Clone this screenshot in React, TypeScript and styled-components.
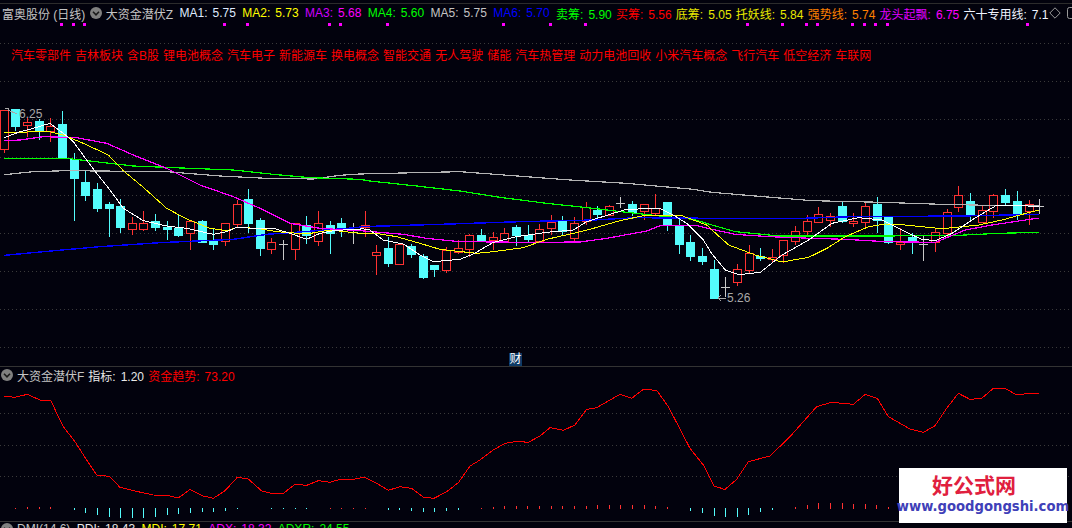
import React from 'react';
import styled, { createGlobalStyle } from 'styled-components';

const GlobalStyle = createGlobalStyle`
  html, body {
    margin: 0;
    background: #02020d;
  }
`;

const Screen = styled.div`
  position: relative;
  display: flex;
  flex-direction: column;
  width: 1072px;
  height: 528px;
  overflow: hidden;
  background: #02020d;
  font-family: "Liberation Sans", "Noto Sans CJK SC", sans-serif;
  font-size: 12px;
`;

const MainPanel = styled.section`
  position: relative;
  flex: none;
  height: 366px;
  border-bottom: 1px solid #333;
`;

const SubPanel = styled.section`
  position: relative;
  flex: none;
  height: 154px;
  border-bottom: 1px solid #333;
`;

const Canvas = styled.svg`
  position: absolute;
  top: 0;
  left: 0;
  display: block;
`;

const TopRule = styled.div`
  position: relative;
  height: 3px;
  border-bottom: 1px solid #2c2c2c;
`;

const Legend = styled.div<{ $height?: number; $left?: number }>`
  position: relative;
  flex: none;
  display: flex;
  align-items: center;
  gap: 6.4px;
  height: ${(p) => p.$height ?? 18}px;
  padding-left: ${(p) => p.$left ?? 2}px;
  white-space: nowrap;
  overflow: hidden;
`;

const Title = styled.span<{ $pull?: number }>`
  margin-left: ${(p) => -(p.$pull ?? 0)}px;
  color: #c4c4c4;
`;

const Item = styled.span<{ $label: string; $value?: string; $tight?: boolean; $pull?: number }>`
  display: inline-flex;
  align-items: baseline;
  gap: 5px;
  margin-left: ${(p) => -(p.$pull ?? 0)}px;
  margin-right: ${(p) => (p.$tight ? -2.2 : 0)}px;
  color: ${(p) => p.$label};

  b {
    font-weight: 400;
    color: ${(p) => p.$value ?? p.$label};
  }
`;

const RoundToggle = styled.svg<{ $pull?: number }>`
  flex: none;
  margin-left: ${(p) => -(p.$pull ?? 0)}px;
`;

const ToolIcon = styled.svg<{ $pull?: number }>`
  flex: none;
  margin-left: ${(p) => -(p.$pull ?? 0)}px;
`;

const ConceptRow = styled.div`
  position: relative;
  display: flex;
  gap: 4px;
  margin-top: 26px;
  padding-left: 11px;
  line-height: 16px;
  color: #ff0000;
  white-space: nowrap;
`;

const EventBadge = styled.div`
  position: absolute;
  left: 509px;
  bottom: 0;
  width: 13px;
  height: 13px;
  line-height: 13px;
  text-align: center;
  background: #0d3a66;
  color: #fff;
`;

const Watermark = styled.div`
  position: absolute;
  left: 899px;
  top: 468px;
  display: flex;
  flex-direction: column;
  align-items: center;
  width: 168px;
  height: 55px;
  background: #fff;
`;

const WatermarkName = styled.div`
  margin-top: 5px;
  padding-right: 18px;
  font-size: 21px;
  line-height: 26px;
  font-weight: 700;
  color: #e0203e;
`;

const WatermarkUrl = styled.div`
  font-family: "DejaVu Sans", sans-serif;
  font-size: 13.2px;
  line-height: 16px;
  font-weight: 700;
  color: #4040b8;
`;

const PriceMark = styled.text`
  font-size: 12px;
  font-family: "Liberation Sans", sans-serif;
  fill: #a8a8a8;
`;

type Candle = [number, number, number, number, number, 'r' | 'c' | 'g'];

// x, wick top, wick bottom, body top, body bottom, kind
const candles: Candle[] = [
  [4, 110, 153, 110, 149, 'r'], [15, 109, 131, 109, 126, 'c'], [27, 118, 137, 122, 125, 'r'],
  [39, 119, 140, 121, 130, 'c'], [50, 118, 142, 126, 131, 'r'], [62, 111, 158, 124, 157, 'c'],
  [74, 153, 221, 159, 178, 'c'], [85, 170, 201, 182, 195, 'c'], [97, 183, 212, 189, 208, 'c'],
  [109, 202, 237, 204, 208, 'c'], [120, 199, 233, 206, 227, 'c'], [132, 217, 235, 223, 229, 'r'],
  [143, 211, 231, 223, 229, 'r'], [155, 214, 231, 221, 227, 'c'], [167, 221, 240, 227, 229, 'c'],
  [178, 214, 237, 228, 235, 'c'], [190, 220, 250, 221, 233, 'r'], [202, 220, 243, 221, 242, 'c'],
  [213, 228, 250, 240, 244, 'c'], [225, 223, 246, 223, 241, 'r'], [237, 200, 227, 204, 224, 'r'],
  [248, 189, 233, 199, 223, 'c'], [260, 218, 256, 220, 248, 'c'], [271, 238, 254, 242, 249, 'r'],
  [283, 240, 260, 244, 244, 'g'], [295, 223, 260, 223, 249, 'r'], [306, 216, 244, 225, 235, 'c'],
  [318, 211, 246, 223, 241, 'r'], [330, 221, 254, 225, 233, 'c'], [341, 218, 237, 223, 227, 'c'],
  [353, 223, 244, 232, 232, 'g'], [365, 211, 237, 225, 227, 'r'], [376, 245, 275, 252, 255, 'r'],
  [388, 237, 267, 248, 263, 'c'], [399, 244, 264, 244, 264, 'r'], [411, 244, 258, 246, 254, 'c'],
  [423, 254, 279, 256, 277, 'c'], [434, 265, 277, 265, 269, 'c'], [446, 247, 273, 250, 270, 'r'],
  [458, 240, 254, 248, 252, 'r'], [469, 234, 257, 235, 249, 'r'], [481, 229, 242, 235, 240, 'c'],
  [493, 232, 250, 237, 240, 'r'], [504, 228, 242, 233, 242, 'r'], [516, 225, 246, 227, 235, 'c'],
  [528, 225, 242, 235, 239, 'c'], [539, 224, 242, 229, 241, 'r'], [551, 215, 235, 222, 228, 'r'],
  [562, 216, 235, 221, 231, 'c'], [574, 217, 242, 223, 238, 'r'], [586, 202, 225, 207, 221, 'r'],
  [597, 206, 218, 210, 214, 'c'], [609, 205, 215, 206, 215, 'r'], [620, 197, 208, 203, 203, 'g'],
  [632, 201, 216, 204, 212, 'c'], [644, 204, 220, 204, 211, 'r'], [655, 194, 215, 208, 213, 'r'],
  [667, 202, 231, 202, 225, 'c'], [679, 218, 254, 226, 244, 'c'], [690, 235, 261, 242, 256, 'c'],
  [702, 248, 265, 256, 261, 'c'], [714, 260, 298, 269, 298, 'c'], [725, 277, 297, 287, 287, 'g'],
  [737, 264, 286, 269, 282, 'r'], [749, 245, 273, 253, 270, 'r'], [760, 248, 261, 256, 258, 'c'],
  [772, 249, 263, 257, 259, 'r'], [783, 240, 263, 240, 255, 'r'], [795, 226, 245, 231, 241, 'r'],
  [807, 215, 235, 221, 231, 'r'], [818, 207, 222, 214, 222, 'r'], [830, 213, 227, 216, 220, 'r'],
  [842, 202, 223, 206, 221, 'c'], [853, 213, 227, 221, 223, 'r'], [865, 202, 227, 206, 222, 'r'],
  [877, 197, 233, 204, 220, 'c'], [888, 217, 244, 217, 242, 'c'], [900, 228, 250, 242, 244, 'r'],
  [912, 233, 254, 237, 242, 'c'], [923, 235, 261, 244, 244, 'g'], [935, 229, 252, 232, 242, 'r'],
  [947, 209, 237, 212, 233, 'r'], [958, 186, 212, 195, 207, 'r'], [970, 193, 220, 201, 215, 'c'],
  [982, 205, 223, 210, 222, 'r'], [993, 194, 218, 195, 211, 'r'], [1005, 189, 205, 195, 202, 'c'],
  [1017, 191, 220, 201, 214, 'c'], [1029, 200, 225, 204, 211, 'r'], [1039, 199, 214, 206, 206, 'g'],
];

const candleColor = { r: '#ff3232', c: '#54fcfc', g: '#c8c8c8' };

// lines were traced off a 3x crop: each run is origin x, origin y and then x,y pairs at 3x
const traced = (runs: [number, number, number[]][]) =>
  runs
    .flatMap(([ox, oy, raw]) =>
      raw.flatMap((v, i) => (i % 2 === 0 ? [`${ox + v / 3},${oy + raw[i + 1] / 3}`] : [])),
    )
    .join(' ');

const maLines = [
  {
    color: '#b4b4b4',
    width: 1.2,
    points: traced([
      [0, 100, [13, 224, 100, 215, 200, 212, 500, 215, 660, 228, 800, 235, 940, 237, 1020, 226, 1080, 222]],
      [360, 180, [300, -25, 630, 0, 800, 10, 1000, 28]],
      [712, 170, [0, 67, 130, 78, 300, 92, 510, 97, 690, 103, 830, 106, 980, 108]],
    ]),
  },
  {
    color: '#00ff00',
    width: 1.2,
    points: traced([
      [0, 100, [13, 175, 200, 175, 260, 182, 400, 198, 520, 203, 700, 210, 830, 224, 930, 233, 1080, 238]],
      [360, 180, [30, 3, 170, 18, 300, 33, 420, 52, 560, 70, 700, 85, 800, 97, 900, 108, 1000, 118]],
      [712, 170, [0, 165, 70, 185, 200, 198, 480, 198, 720, 197, 860, 190, 980, 187]],
    ]),
  },
  {
    color: '#0000ff',
    width: 1.4,
    points: traced([
      [0, 100, [13, 466, 130, 455, 300, 440, 480, 428, 700, 418, 800, 403, 900, 396, 1080, 382]],
      [360, 180, [0, 140, 240, 133, 480, 125, 700, 120, 830, 113]],
      [712, 170, [0, 145, 270, 145, 420, 140, 750, 138, 980, 133]],
    ]),
  },
  {
    color: '#ff00ff',
    width: 1.2,
    points: traced([
      [0, 100, [13, 122, 60, 120, 130, 110, 230, 113, 320, 130, 400, 165, 500, 205, 600, 255, 700, 290, 780, 325, 870, 370, 960, 385, 1080, 392]],
      [360, 180, [0, 152, 70, 158, 130, 163, 200, 175, 300, 185, 520, 187, 660, 186, 740, 175, 860, 153, 900, 137, 1010, 137]],
      [712, 170, [0, 178, 70, 193, 170, 200, 300, 205, 400, 208, 520, 215, 670, 217, 760, 180, 840, 165, 960, 147, 980, 145]],
    ]),
  },
  {
    color: '#ffff00',
    width: 1,
    points: traced([
      [0, 100, [13, 97, 150, 95, 190, 105, 250, 130, 325, 165, 370, 212, 430, 262, 500, 325, 560, 357, 630, 385, 680, 392, 710, 382, 770, 385, 830, 395, 920, 402, 990, 390, 1080, 400]],
      [360, 180, [0, 160, 60, 162, 110, 170, 180, 190, 240, 208, 350, 220, 400, 215, 490, 203, 560, 178, 640, 160, 700, 145, 780, 122, 860, 105, 960, 105, 1040, 135]],
      [712, 170, [0, 180, 50, 225, 130, 255, 210, 276, 290, 262, 345, 235, 400, 200, 470, 170, 520, 162, 580, 165, 690, 176, 800, 165, 870, 150, 960, 125, 980, 120]],
    ]),
  },
  {
    color: '#ffffff',
    width: 1,
    points: traced([
      [0, 100, [13, 113, 60, 95, 100, 85, 150, 70, 190, 100, 220, 125, 260, 180, 290, 220, 330, 270, 370, 325, 430, 362, 500, 378, 560, 385, 640, 403, 680, 395, 710, 382, 760, 385, 820, 385, 870, 400, 920, 418, 960, 400, 1000, 392, 1060, 388, 1080, 388]],
      [360, 180, [0, 145, 30, 150, 70, 180, 130, 192, 180, 225, 220, 245, 300, 238, 340, 222, 400, 187, 470, 170, 560, 157, 640, 150, 680, 125, 760, 100, 800, 88, 900, 85, 940, 105, 980, 130, 1030, 180]],
      [712, 170, [0, 252, 40, 300, 80, 314, 145, 307, 210, 255, 290, 210, 360, 160, 440, 143, 510, 150, 590, 190, 630, 208, 670, 212, 720, 190, 780, 150, 850, 108, 900, 105, 980, 110]],
    ]),
  },
];

const trendLine = traced([
  [0, 360, [12, 108, 45, 112, 82, 103, 120, 120, 152, 120, 175, 170, 190, 200, 225, 245, 260, 300, 290, 345, 328, 349, 360, 382, 400, 392, 460, 405, 505, 407, 535, 414, 570, 388, 610, 408, 640, 415, 675, 392, 712, 352, 745, 357, 785, 393, 815, 400, 850, 400, 885, 373, 920, 376, 955, 362, 990, 367, 1020, 358, 1060, 358, 1080, 354]],
  [360, 360, [15, 352, 50, 370, 85, 391, 120, 380, 155, 385, 190, 411, 222, 415, 260, 395, 295, 368, 330, 318, 360, 300, 400, 270, 435, 250, 470, 244, 505, 247, 540, 228, 570, 203, 610, 211, 645, 195, 680, 148, 710, 143, 780, 103, 815, 115, 850, 88, 890, 91, 925, 140, 990, 265, 1030, 315, 1063, 380, 1080, 382]],
  [720, 360, [0, 385, 15, 388, 50, 358, 85, 305, 150, 288, 210, 230, 290, 140, 335, 127, 400, 133, 436, 103, 472, 115, 505, 170, 570, 207, 610, 217, 645, 197, 680, 145, 715, 100, 750, 118, 785, 115, 820, 85, 855, 85, 890, 105, 925, 100, 957, 100]],
]);

// x, height: positive is a red stick going up, negative a cyan stick going down
const sticks: [number, number][] = [
  [15, 1], [27, 2], [39, 2], [50, 2], [74, -2], [85, -5], [97, -7], [109, -9], [120, -10], [132, -10],
  [143, -10], [155, -9], [167, -7], [178, -6], [190, -5], [202, -4], [213, -4], [225, -3], [237, -1],
  [271, -1], [283, -1], [295, -1], [306, -1], [330, 1], [341, 1], [353, 1], [365, 1], [388, -2], [399, -2],
  [411, -3], [423, -4], [434, -4], [446, -3], [458, -2], [481, 1], [493, 2], [504, 3], [516, 3], [527, 3],
  [539, 3], [551, 3], [562, 3], [574, 3], [586, 3], [597, 4], [609, 4], [620, 4], [632, 4], [644, 4],
  [655, 3], [667, 2], [690, -3], [702, -5], [714, -8], [725, -9], [737, -9], [748, -7], [760, -4], [772, -2],
  [795, 2], [807, 4], [818, 6], [830, 6], [842, 6], [853, 5], [865, 5], [876, 4], [888, 2],
];

const signalDots = [61, 73, 84, 224, 247, 329, 340, 387, 503, 550, 585, 747, 782, 806, 817, 852, 864, 875, 887, 1027];

const concepts = [
  '汽车零部件', '吉林板块', '含B股', '锂电池概念', '汽车电子', '新能源车', '换电概念', '智能交通', '无人驾驶', '储能',
  '汽车热管理', '动力电池回收', '小米汽车概念', '飞行汽车', '低空经济', '车联网',
];

const averages = [
  { label: 'MA1:', value: '5.75', color: '#dfeaff' },
  { label: 'MA2:', value: '5.73', color: '#ffff00' },
  { label: 'MA3:', value: '5.68', color: '#d000ff', valueColor: '#ff00ff' },
  { label: 'MA4:', value: '5.60', color: '#00ff00' },
  { label: 'MA5:', value: '5.75', color: '#c4c4c4' },
  { label: 'MA6:', value: '5.70', color: '#0000ff' },
  { label: '卖筹:', value: '5.90', color: '#00ff00', tight: true },
  { label: '买筹:', value: '5.56', color: '#ff0000', tight: true },
  { label: '底筹:', value: '5.05', color: '#e8e800', tight: true },
  { label: '托妖线:', value: '5.84', color: '#e8e800', tight: true },
  { label: '强势线:', value: '5.74', color: '#ff8000', tight: true },
  { label: '龙头起飘:', value: '6.75', color: '#e000ff', valueColor: '#ff00ff', tight: true },
  { label: '六十专用线:', value: '7.1', color: '#f0f4ff' },
];

const Toggle = ({ pull }: { pull?: number }) => (
  <RoundToggle $pull={pull} width="12" height="12" viewBox="0 0 12 12">
    <circle cx="6" cy="6" r="6" fill="#808080" />
    <path d="M3 4.8 6 7.8 9 4.8" fill="none" stroke="#1a1a1a" strokeWidth="1.6" />
  </RoundToggle>
);

const GridLines = ({ rows }: { rows: number[] }) => (
  <g stroke="#3a3a3a" strokeDasharray="1 3">
    {rows.map((y) => (
      <line key={y} x1="0" x2="1072" y1={y + 0.5} y2={y + 0.5} />
    ))}
  </g>
);

const PriceChart = () => (
  <Canvas width="1072" height="366" viewBox="0 0 1072 366" shapeRendering="crispEdges">
    <GridLines rows={[43, 81, 119, 157, 195, 233, 271, 309, 347]} />
    {signalDots.map((x) => (
      <rect key={x} x={x - 1} y="23" width="3" height="3" fill="#ff00ff" />
    ))}
    {candles.map(([x, top, bottom, bodyTop, bodyBottom, kind]) => (
      <g key={x} stroke={candleColor[kind]}>
        <line x1={x + 0.5} x2={x + 0.5} y1={top} y2={bottom} />
        {kind === 'g' ? (
          <line x1={x - 4} x2={x + 5} y1={bodyTop + 0.5} y2={bodyTop + 0.5} />
        ) : (
          <rect
            x={x - 3.5}
            y={bodyTop + 0.5}
            width="8"
            height={bodyBottom - bodyTop}
            fill={kind === 'r' ? '#02020d' : candleColor.c}
          />
        )}
      </g>
    ))}
    {maLines.map((line) => (
      <polyline key={line.color} points={line.points} fill="none" stroke={line.color} strokeWidth={line.width} />
    ))}
    <g stroke="#a8a8a8" fill="none">
      <path d="M5 108h3v3M8 110l9 4" />
      <path d="M718 298h8M718 298l3-3M718 298l3 3" />
    </g>
    <PriceMark x="19" y="118">6.25</PriceMark>
    <PriceMark x="727" y="302">5.26</PriceMark>
  </Canvas>
);

const FlowChart = () => (
  <Canvas width="1072" height="154" viewBox="0 367 1072 154" shapeRendering="crispEdges">
    <GridLines rows={[413, 445, 476]} />
    <polyline points={trendLine} fill="none" stroke="#ff0000" strokeWidth="1" />
    {sticks.map(([x, h]) => (
      <line
        key={x}
        x1={x + 0.5}
        x2={x + 0.5}
        y1={h > 0 ? 509 - h : 508}
        y2={h > 0 ? 509 : 508 - h}
        stroke={h > 0 ? '#ff3232' : '#54fcfc'}
      />
    ))}
  </Canvas>
);

const App = () => {
  return (
    <Screen>
      <GlobalStyle />
      <MainPanel>
        <PriceChart />
        <TopRule />
        <Legend>
          <Title>富奥股份 (日线)</Title>
          <Toggle pull={2} />
          <Title $pull={2.4}>大资金潜伏Z</Title>
          {averages.map((a) => (
            <Item key={a.label} $label={a.color} $value={a.valueColor} $tight={a.tight}>
              {a.label}
              <b>{a.value}</b>
            </Item>
          ))}
          <ToolIcon $pull={6} width="12" height="12" viewBox="0 0 12 12">
            <path d="M6 .8 11.2 6 6 11.2.8 6Z" fill="none" stroke="#9a9a9a" />
          </ToolIcon>
          <ToolIcon width="10" height="12" viewBox="0 0 10 12">
            <rect x=".5" y=".5" width="12" height="11" rx="2" fill="none" stroke="#9a9a9a" />
          </ToolIcon>
        </Legend>
        <ConceptRow>
          {concepts.map((c) => (
            <span key={c}>{c}</span>
          ))}
        </ConceptRow>
        <EventBadge>财</EventBadge>
      </MainPanel>
      <SubPanel>
        <FlowChart />
        <Legend $height={16} $left={1}>
          <Toggle />
          <Title $pull={2.4}>大资金潜伏F</Title>
          <Item $label="#e8e8e8" $pull={2.4} $tight>
            指标:
            <b>1.20</b>
          </Item>
          <Item $label="#ff0000">
            资金趋势:
            <b>73.20</b>
          </Item>
        </Legend>
      </SubPanel>
      <Legend $left={1} $height={13}>
        <Toggle />
        <Title $pull={2.4}>DMI(14,6)</Title>
        <Item $label="#e8e8e8">
          PDI:
          <b>18.43</b>
        </Item>
        <Item $label="#ffff00">
          MDI:
          <b>17.71</b>
        </Item>
        <Item $label="#ff00ff">
          ADX:
          <b>18.32</b>
        </Item>
        <Item $label="#00ff00">
          ADXR:
          <b>24.55</b>
        </Item>
      </Legend>
      <Watermark>
        <WatermarkName>好公式网</WatermarkName>
        <WatermarkUrl>www.goodgongshi.com</WatermarkUrl>
      </Watermark>
    </Screen>
  );
};

export default App;
